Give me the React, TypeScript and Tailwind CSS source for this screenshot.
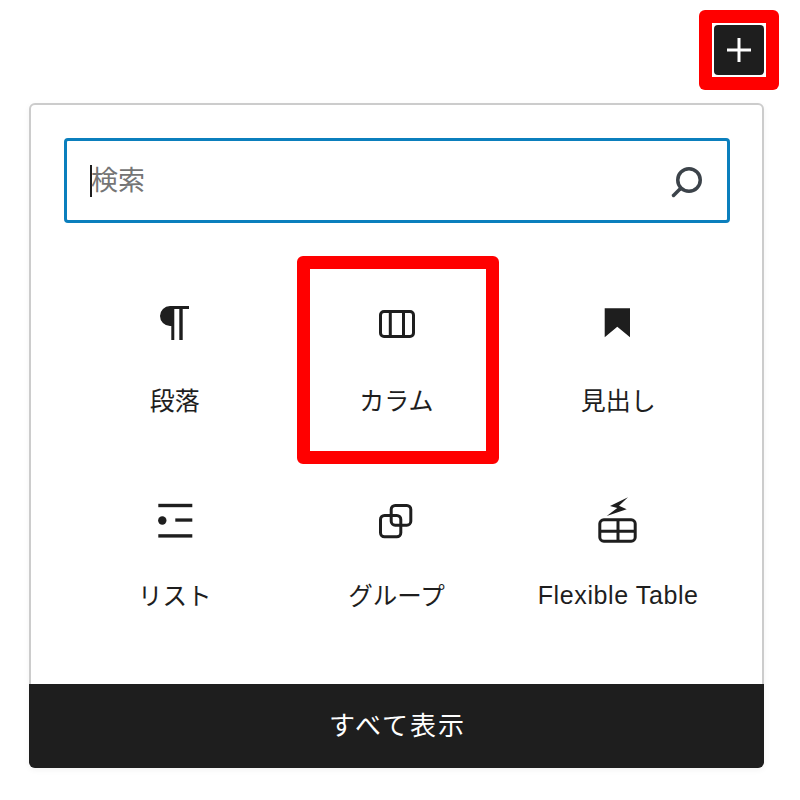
import React from "react";

const ParagraphIcon = () => (
  <svg width="48" height="48" viewBox="0 0 48 48" fill="#1e1e1e">
    <path d="M19 8H38v3H31.700V42H28.300V11H23.300V42H20.300V28H19A10 10 0 0 1 19 8Z" />
  </svg>
);

const ColumnsIcon = () => (
  <svg width="48" height="48" viewBox="0 0 48 48" fill="none" stroke="#1e1e1e" strokeWidth="3">
    <rect x="8.500" y="13.500" width="33" height="25" rx="3.500" />
    <path d="M18.300 13.500v25M31.500 13.500v25" />
  </svg>
);

const BookmarkIcon = () => (
  <svg width="48" height="48" viewBox="0 0 48 48" fill="#1e1e1e">
    <path d="M10.700 10.300H36V39.300L23.300 28.700 10.700 39.300Z" />
  </svg>
);

const ListIcon = () => (
  <svg width="48" height="48" viewBox="0 0 48 48" fill="#1e1e1e">
    <rect x="7.300" y="7.800" width="34" height="3.400" />
    <circle cx="11.300" cy="24.500" r="4.200" />
    <rect x="24.300" y="22.400" width="17" height="3.300" />
    <rect x="7.300" y="38.200" width="34" height="3.400" />
  </svg>
);

const GroupIcon = () => (
  <svg width="48" height="48" viewBox="0 0 48 48" fill="none" stroke="#1e1e1e" strokeWidth="3">
    <rect x="19.200" y="9.500" width="19.600" height="19.700" rx="4" />
    <rect x="8.500" y="19.500" width="20.300" height="21.300" rx="4" />
  </svg>
);

const TableIcon = () => (
  <svg width="48" height="48" viewBox="0 0 48 48">
    <path d="M34 1.300 16 10l7.300 2-10.600 8 20-6.700L25 9.700Z" fill="#1e1e1e" />
    <g fill="none" stroke="#1e1e1e" strokeWidth="3">
      <rect x="5.800" y="23.800" width="35.400" height="21.400" rx="4" />
      <path d="M5.800 35.200h35.400M24 23.800v21.400" />
    </g>
  </svg>
);

const blocks = [
  { label: "段落", icon: <ParagraphIcon />, cell: "gap-[37px]", text: "text-[25px]" },
  { label: "カラム", icon: <ColumnsIcon />, cell: "gap-[37px]", text: "text-[25px]" },
  { label: "見出し", icon: <BookmarkIcon />, cell: "gap-[37px]", text: "text-[25px]" },
  { label: "リスト", icon: <ListIcon />, cell: "gap-[35px]", text: "text-[24.500px]" },
  { label: "グループ", icon: <GroupIcon />, cell: "gap-[35px]", text: "text-[24.500px]" },
  { label: "Flexible Table", icon: <TableIcon />, cell: "gap-[33px]", text: "text-[25px] tracking-[0.6px]" },
];

export default function App() {
  return (
    <div className="h-[800px] w-[800px] bg-white pt-[10px] pl-[29px] font-['Liberation_Sans','Noto_Sans_CJK_JP',sans-serif]">
      <div className="flex w-[750px] justify-end">
        <div className="flex h-[80px] w-[80px] items-center justify-center rounded-[6px] bg-[#ff0000]">
          <div className="flex h-[54px] w-[54px] items-center justify-center bg-white">
            <button className="flex h-[50px] w-[50px] items-center justify-center rounded-[4px] bg-[#1e1e1e]">
              <svg width="26" height="26" viewBox="0 0 26 26" stroke="#fff" strokeWidth="3">
                <path d="M13 1v24M1 13h24" />
              </svg>
            </button>
          </div>
        </div>
      </div>

      <div className="relative mt-[13px] flex h-[665px] w-[735px] flex-col rounded-[6px] border-2 border-[#cccccc] bg-white shadow-[0_2px_6px_rgba(0,0,0,0.05)]">
        <div className="pt-[33px] pr-[32px] pl-[33px]">
          <div className="flex h-[85px] items-center justify-between rounded-[4px] border-[3px] border-[#0b7fbd] pr-[22px] pl-[23px]">
            <div className="flex items-center">
              <div className="h-[32px] w-[2px] bg-[#1e1e1e]" />
              <span className="-ml-[1px] pt-[2px] text-[27px] leading-none text-[#757575]">検索</span>
            </div>
            <svg width="36" height="36" viewBox="0 0 36 36" fill="none" stroke="#3c434a" strokeWidth="3.500">
              <circle cx="20" cy="17" r="11.250" />
              <path d="M11 26 4.500 32.500" strokeLinecap="round" />
            </svg>
          </div>
        </div>

        <div className="grid flex-1 grid-cols-3 grid-rows-[198px_auto] pt-[75px] pr-[33px] pl-[33px]">
          {blocks.map((b) => (
            <div key={b.label} className={`flex flex-col items-center ${b.cell}`}>
              {b.icon}
              <span className={`leading-[36px] text-[#1e1e1e] ${b.text}`}>{b.label}</span>
            </div>
          ))}
        </div>

        <div className="absolute top-[151px] left-[266px] h-[208px] w-[202px] rounded-[6px] border-[13px] border-[#ff0000]" />

        <div className="-mx-[2px] -mb-[2px] flex h-[84px] items-center justify-center rounded-b-[6px] bg-[#1e1e1e] pl-[2px] text-[26px] tracking-[2px] text-white">
          すべて表示
        </div>
      </div>
    </div>
  );
}
